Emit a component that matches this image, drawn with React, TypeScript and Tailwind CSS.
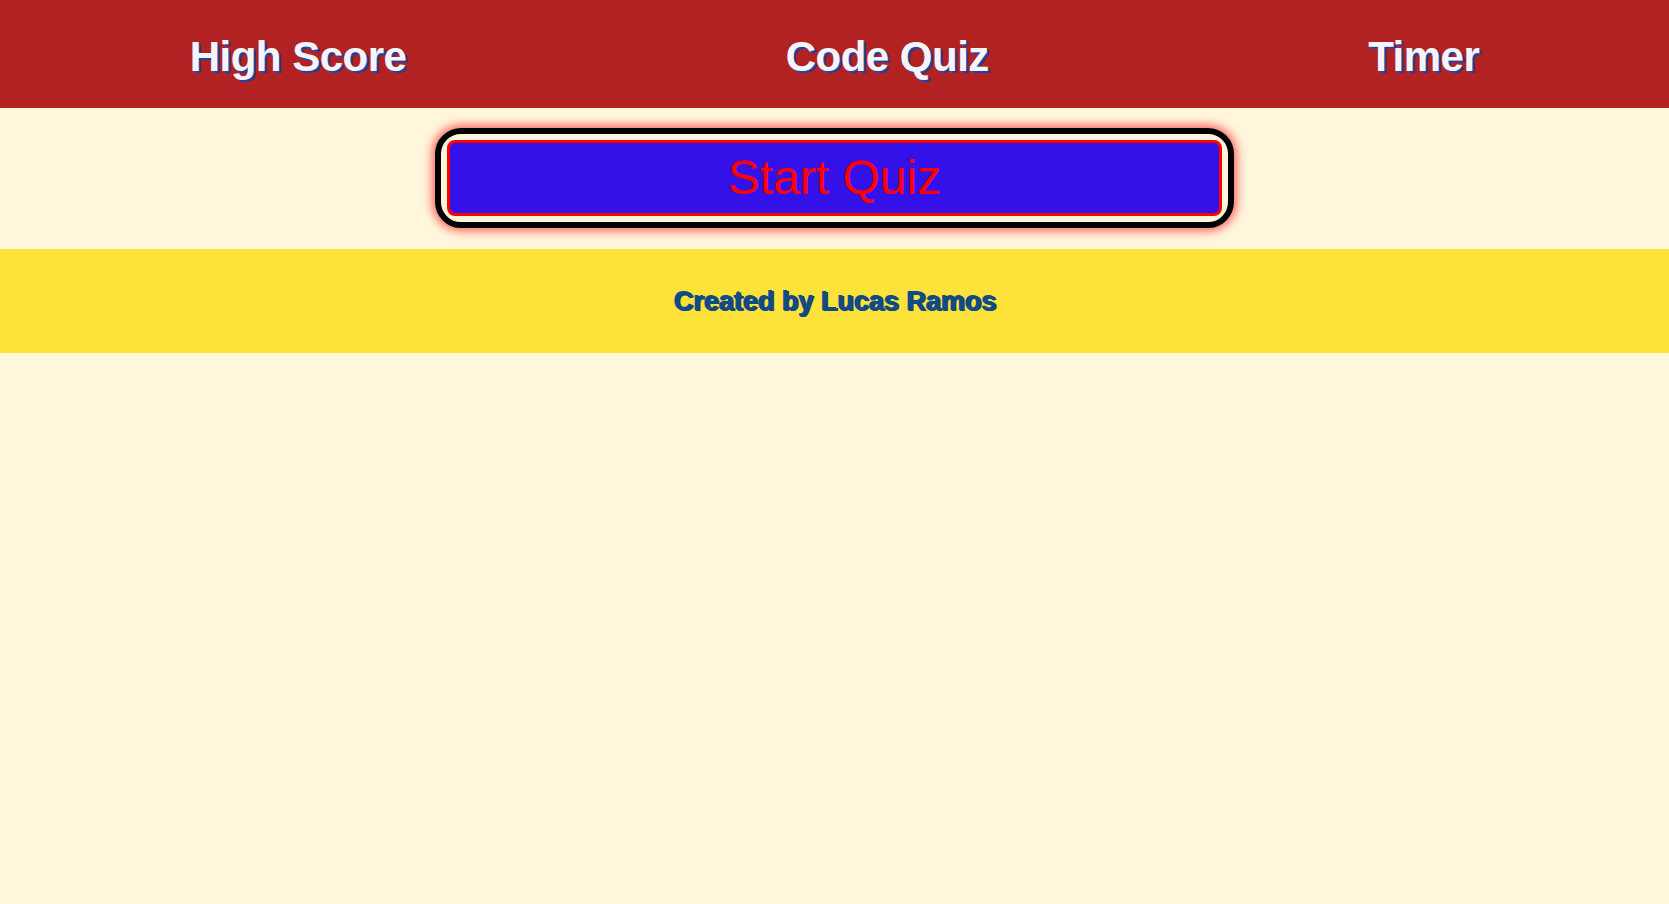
export default function App() {
  const headFont = { fontFamily: '"Liberation Sans", Arial, sans-serif' };

  return (
    <div className="min-h-[904px] bg-[#fff6dc]" style={headFont}>
      <header className="flex h-[108px] items-center justify-around bg-[#b22222] pt-1 text-[42px] font-bold tracking-[-0.5px] text-[#f5f5f7] [text-shadow:2px_2px_0_#1c44a8]">
        <h2>High Score</h2>
        <h1>Code Quiz</h1>
        <h2>Timer</h2>
      </header>

      <main className="flex justify-center py-5">
        <div className="w-[799px] rounded-[26px] border-[6px] border-black p-[6px] shadow-[0_0_10px_3px_rgba(255,40,40,0.7)]">
          <button className="flex h-[76px] w-full items-center justify-center rounded-[8px] border-[3px] border-[#ff0000] bg-[#3311e8] text-[48px] leading-none text-[#ff0000]">
            Start Quiz
          </button>
        </div>
      </main>

      <footer className="mt-px flex h-[104px] items-center justify-center bg-[#fde23a]">
        <p className="text-[27px] font-bold text-[#0f4c86] [text-shadow:1px_1px_0_#0f4c86,2px_1px_0_#2a3f7a]">
          Created by Lucas Ramos
        </p>
      </footer>
    </div>
  );
}
